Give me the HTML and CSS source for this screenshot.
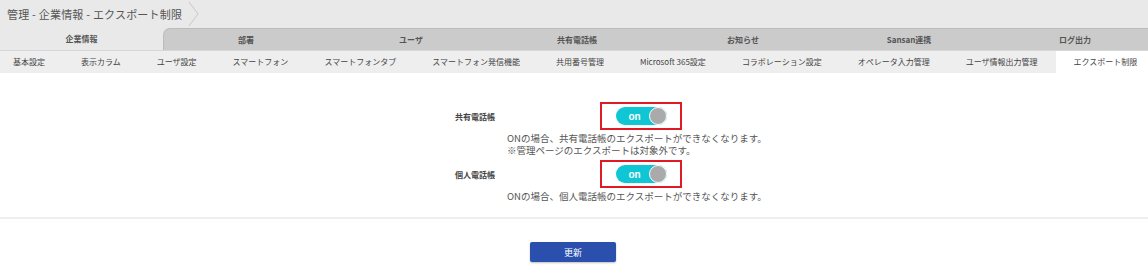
FILE: index.html
```html
<html>
<head>
<title>管理 - 企業情報 - エクスポート制限</title>
<link rel="stylesheet" href="styles.css">
</head>
<body>
<div class="header">
  <span class="crumb">管理 - 企業情報 - エクスポート制限</span>
  <svg class="chevron" width="12" height="28" viewBox="0 0 12 28"><polyline points="1,2 10,14 1,26" fill="none" stroke="#c8c8c8" stroke-width="1"/></svg>
</div>

<div class="tabs">
  <div class="tab active">企業情報</div>
  <div class="graytabs">
    <div class="tab">部署</div>
    <div class="tab">ユーザ</div>
    <div class="tab">共有電話帳</div>
    <div class="tab">お知らせ</div>
    <div class="tab">Sansan連携</div>
    <div class="tab">ログ出力</div>
  </div>
</div>

<div class="subtabs">
  <div class="subtab">基本設定</div>
  <div class="subtab">表示カラム</div>
  <div class="subtab">ユーザ設定</div>
  <div class="subtab">スマートフォン</div>
  <div class="subtab">スマートフォンタブ</div>
  <div class="subtab">スマートフォン発信機能</div>
  <div class="subtab">共用番号管理</div>
  <div class="subtab">Microsoft 365設定</div>
  <div class="subtab">コラボレーション設定</div>
  <div class="subtab">オペレータ入力管理</div>
  <div class="subtab">ユーザ情報出力管理</div>
  <div class="subtab current">エクスポート制限</div>
</div>

<form name="exportlimit" class="content">
  <div class="row">
    <div class="label">共有電話帳</div>
    <div class="field">
      <div class="hilite"><span class="toggle"><span class="on">on</span><span class="knob"></span></span></div>
    </div>
  </div>
  <div class="note">ONの場合、共有電話帳のエクスポートができなくなります。<br>※管理ページのエクスポートは対象外です。</div>

  <div class="row second">
    <div class="label">個人電話帳</div>
    <div class="field">
      <div class="hilite"><span class="toggle"><span class="on">on</span><span class="knob"></span></span></div>
    </div>
  </div>
  <div class="note">ONの場合、個人電話帳のエクスポートができなくなります。</div>

  <div class="actions">
    <input type="button" class="update" value="更新">
  </div>
</form>
</body>
</html>
```

FILE: styles.css
```css
body {
    margin: 0;
    background: white;
    font-family: "Noto Sans CJK JP", "Noto Sans", sans-serif;
    color: #333;
    overflow: hidden;
}

.header {
    height: 28px;
    background: #e9e9e9;
    display: flex;
    align-items: center;
    padding-left: 7px;
}

.crumb {
    font-size: 11px;
    color: #555;
    letter-spacing: 0.2px;
}

.chevron {
    margin-left: 6px;
}

.tabs {
    display: flex;
    height: 22px;
    background: #e9e9e9;
    border-bottom: 1px solid #d8d8d8;
}

.tab {
    width: 166px;
    flex: none;
    font-size: 8px;
    font-weight: bold;
    color: #555;
    text-align: center;
    line-height: 22px;
}

.tab.active {
    width: 163px;
}

.graytabs {
    display: flex;
    flex: 1;
    background: #cbcbcb;
    border-top: 1px solid #bcbcbc;
    border-left: 1px solid #bcbcbc;
    border-top-left-radius: 7px;
    overflow: hidden;
}

.graytabs .tab {
    line-height: 21px;
}

.graytabs .tab:first-child {
    width: 164px;
}

.subtabs {
    display: flex;
    height: 22px;
    background: #eeeeee;
    white-space: nowrap;
}

.subtab {
    font-size: 8px;
    color: #444;
    line-height: 22px;
    padding: 0 18px;
}

.subtab:first-child {
    padding-left: 13px;
}

.subtab.current {
    background: white;
    flex: 1;
    padding-left: 18px;
}

.content {
    margin: 0;
    padding-top: 27px;
}

.row {
    display: flex;
    align-items: center;
    height: 32px;
}

.row.second {
    margin-top: 2px;
}

.label {
    padding-left: 455px;
    box-sizing: border-box;
    width: 600px;
    font-size: 8px;
    font-weight: bold;
    color: #444;
}

.hilite {
    width: 82px;
    height: 28px;
    border: 2px solid #e01a24;
    box-sizing: border-box;
    display: flex;
    align-items: center;
    justify-content: center;
}

.toggle {
    display: flex;
    align-items: center;
    width: 51px;
    height: 18px;
    border-radius: 9px;
    background: #0ec6d4;
    position: relative;
}

.on {
    color: white;
    font-family: "Liberation Sans", Arial, sans-serif;
    font-size: 10px;
    font-weight: bold;
    width: 38px;
    text-align: center;
}

.knob {
    position: absolute;
    right: 0;
    top: 0;
    width: 18px;
    height: 18px;
    border-radius: 50%;
    background: #aaaaaa;
    border: 1px solid white;
    box-sizing: border-box;
}

.note {
    padding-left: 507px;
    font-size: 9.5px;
    line-height: 12px;
    color: #555;
}

.actions {
    margin-top: 15px;
    border-top: 2px solid #eeeeee;
    padding-top: 23px;
    padding-left: 530px;
}

.update {
    width: 86px;
    height: 20px;
    background: #2a4fad;
    color: white;
    border: none;
    border-radius: 2px;
    box-shadow: 0 1px 2px rgba(0,0,0,0.25);
    font-family: "Noto Sans CJK JP", sans-serif;
    font-size: 9px;
    padding: 0;
}
```
